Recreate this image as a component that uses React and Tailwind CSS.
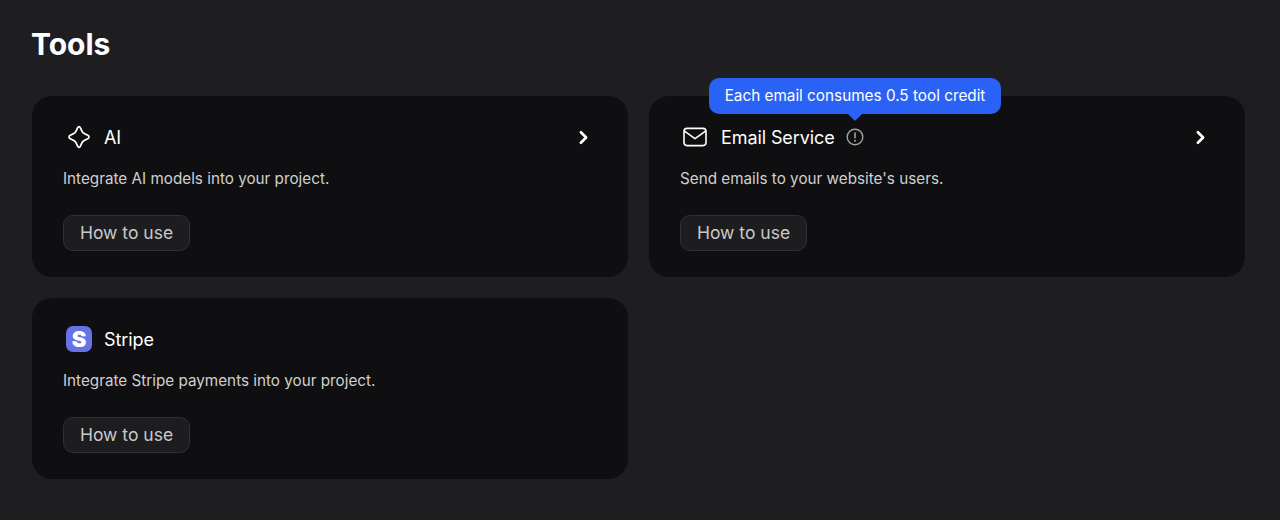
import { ChevronRight } from 'lucide-react'

function SparkIcon() {
  return (
    <svg width="26" height="26" viewBox="0 0 26 26" fill="none" stroke="white" strokeWidth="1.7" strokeLinejoin="round" className="translate-x-[1px]">
      <path d="M13 2.6c.7 0 1.1.5 1.4 1.2.9 2.2 1.4 3.6 2.5 4.8 1.2 1.1 2.6 1.7 4.9 2.7.7.3 1.2.9 1.2 1.7s-.5 1.4-1.2 1.7c-2.3 1-3.7 1.6-4.9 2.7-1.1 1.2-1.6 2.6-2.5 4.8-.3.7-.7 1.2-1.4 1.2s-1.1-.5-1.4-1.2c-.9-2.2-1.4-3.6-2.5-4.8-1.2-1.1-2.6-1.7-4.9-2.7-.7-.3-1.2-.9-1.2-1.7s.5-1.4 1.2-1.7c2.3-1 3.7-1.6 4.9-2.7 1.1-1.2 1.6-2.6 2.5-4.8.3-.7.7-1.2 1.4-1.2z" />
    </svg>
  )
}

function MailIcon() {
  return (
    <svg width="26" height="26" viewBox="0 0 26 26" fill="none" stroke="white" strokeWidth="1.6" strokeLinecap="round" strokeLinejoin="round">
      <rect x="2" y="4.4" width="22" height="17.2" rx="3" />
      <path d="M2.8 7.4 13 14.6l10.2-7.2" />
    </svg>
  )
}

function StripeIcon() {
  return (
    <div className="flex h-[26px] w-[26px] translate-x-[1px] items-center justify-center rounded-[7px] bg-[#6772e5] text-[22px] leading-none font-black text-white">
      S
    </div>
  )
}

function InfoIcon() {
  return (
    <svg width="18" height="18" viewBox="0 0 18 18" fill="none" stroke="#a3a3a3" strokeWidth="1.4" strokeLinecap="round">
      <circle cx="9" cy="9" r="7.8" />
      <path d="M9 5v4.8" strokeWidth="1.6" />
      <path d="M9 12.7v.1" strokeWidth="2" />
    </svg>
  )
}

function ToolCard({ icon, title, description, info, tooltip, arrow }) {
  return (
    <div className="relative h-[181px] rounded-[20px] bg-[#0f0f11] pt-[28px] pr-[34px] pl-[31px]">
      <div className="flex h-[26px] items-center justify-between">
        <div className="flex items-center">
          <div className="ml-[2px]">{icon}</div>
          <span className="ml-[13px] text-[18px] tracking-[-0.1px] text-white">{title}</span>
          {info && <div className="ml-[11px]"><InfoIcon /></div>}
        </div>
        {arrow && <ChevronRight size={21} strokeWidth={3} className="text-white" />}
      </div>
      <p className="mt-[17px] text-[15.25px] leading-[24px] text-[#d0d0d0]">{description}</p>
      <button className="mt-[24px] flex h-[36px] w-[127px] items-center justify-center rounded-[10px] border border-[#2f3033] bg-[#1d1d1f] text-[17.5px] text-[#c9c9c9]">
        How to use
      </button>
      {tooltip && (
        <div className="absolute top-[-18px] left-[60px] flex h-[36px] w-[292px] items-center justify-center rounded-[10px] bg-[#2b62f6] text-[15.3px] text-white">
          {tooltip}
          <div className="absolute bottom-[-5px] left-[141px] h-[10px] w-[10px] rotate-45 rounded-[1px] bg-[#2b62f6]" />
        </div>
      )}
    </div>
  )
}

export default function App() {
  return (
    <div className="h-[520px] overflow-hidden bg-[#1e1e20] px-[32px] pt-[24px] font-['Inter',sans-serif]">
      <h1 className="-ml-[1px] text-[30px] leading-[40px] font-bold text-white">Tools</h1>
      <div className="mt-[32px] grid w-[1213px] grid-cols-2 gap-x-[21px] gap-y-[21px]">
        <ToolCard icon={<SparkIcon />} title="AI" description="Integrate AI models into your project." arrow />
        <ToolCard
          icon={<MailIcon />}
          title="Email Service"
          description="Send emails to your website's users."
          info
          arrow
          tooltip="Each email consumes 0.5 tool credit"
        />
        <ToolCard icon={<StripeIcon />} title="Stripe" description="Integrate Stripe payments into your project." />
      </div>
    </div>
  )
}
